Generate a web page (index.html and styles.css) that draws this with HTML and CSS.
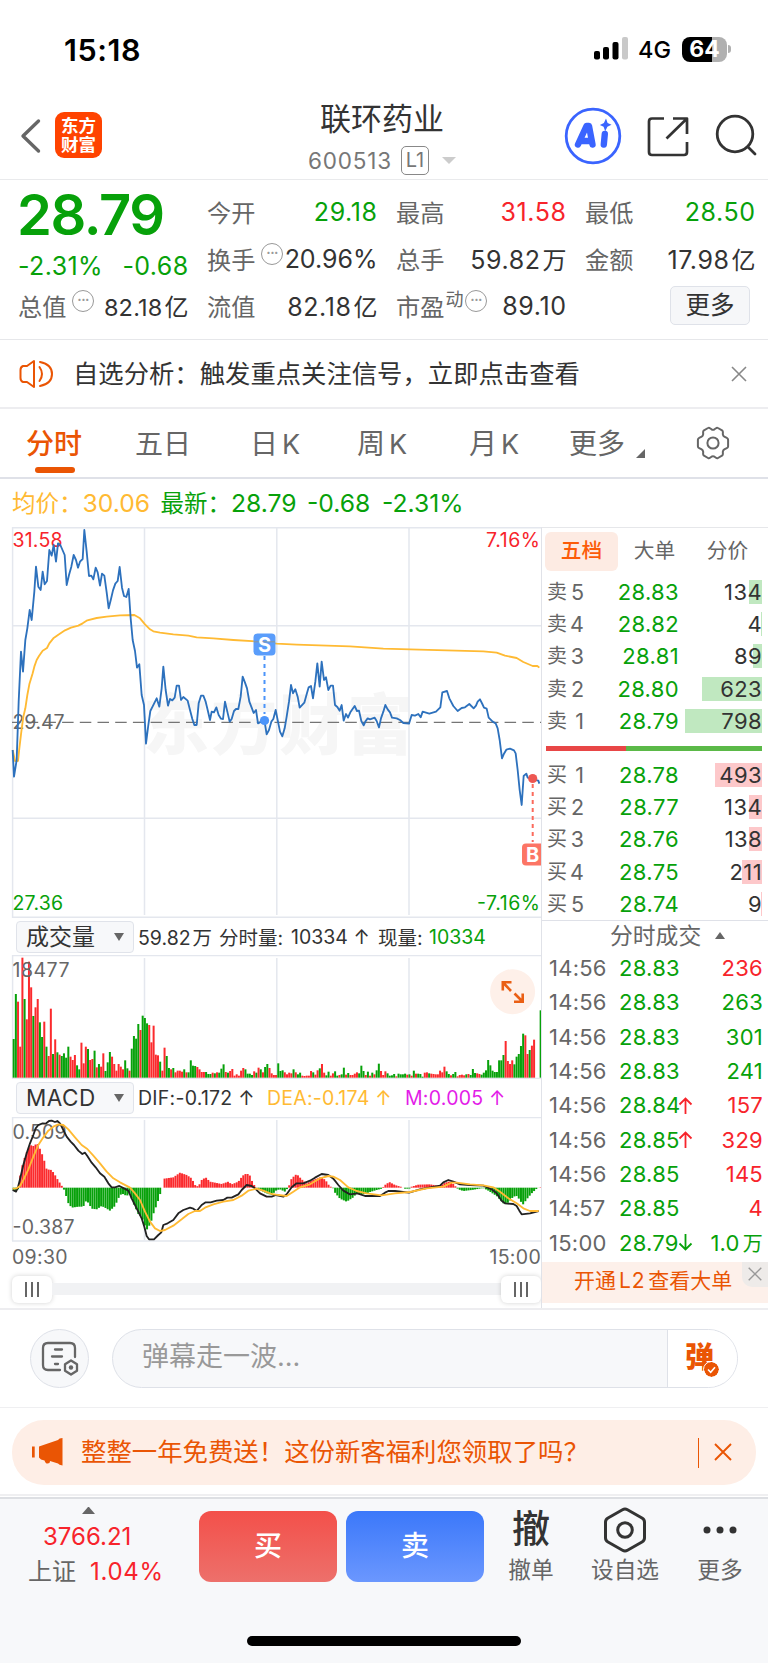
FILE: index.html
```html
<!DOCTYPE html>
<html lang="zh-CN">
<head>
<meta charset="utf-8">
<title>联环药业 600513</title>
<link rel="stylesheet" href="styles.css">
</head>
<body>
<div class="app">
  <div class="status">
    <span class="clock">15:18</span>
    <svg class="signal" width="34" height="24" viewBox="0 0 34 24"><rect x="0" y="14" width="6" height="8.500" rx="2"/><rect x="9" y="10" width="6" height="12.500" rx="2"/><rect x="18.500" y="5" width="6" height="17.500" rx="2"/><rect x="28" y="0" width="6" height="22.500" rx="2" fill="#c9c9c9"/></svg>
    <span class="net">4G</span>
    <span class="battery">64</span><span class="nub"></span>
  </div>

  <header class="header">
    <div class="head-left">
      <svg width="22" height="36" viewBox="0 0 22 36"><path d="M18.500 3 3 18l15.500 15" fill="none" stroke="#666" stroke-width="3.400" stroke-linecap="round" stroke-linejoin="round"/></svg>
      <div class="logo"><span>东方</span><span>财富</span></div>
    </div>
    <div class="title">
      <h1>联环药业</h1>
      <div class="code"><span class="num">600513</span><span class="level">L1</span><i class="tri-down"></i></div>
    </div>
    <div class="head-icons">
      <svg width="58" height="58" viewBox="0 0 58 58"><circle cx="29" cy="29" r="26.800" fill="none" stroke="#3a64ff" stroke-width="2.800"/><g fill="none" stroke="#3a64ff" stroke-width="6.400" stroke-linecap="round" stroke-linejoin="round"><path d="M14 37.500 22.500 19H25l3.500 18.500M19 34H26"/><path d="m40.800 27-1 10.500"/></g><path d="m42 11.500 1.600 4.400 3.900 1.900-4.100 2-2.200 4.500-1.600-4.500-3.700-1.900 4-1.900z" fill="#3a64ff"/></svg>
      <svg class="share" width="42" height="42" viewBox="0 0 42 42"><g fill="none" stroke="#333" stroke-width="2.700"><path d="M17 2.500H5q-3 0-3 3V36q0 3 3 3h32q3 0 3-3V26M26 2.500h14V18M40 2.500 19.500 22.500" stroke-linejoin="round"/></g></svg>
      <svg class="search" width="44" height="44" viewBox="0 0 44 44"><g fill="none" stroke="#333" stroke-width="2.800" stroke-linecap="round"><circle cx="20" cy="20" r="17.800"/><path d="m33 33 7 7"/></g></svg>
    </div>
  </header>

  <section class="quote">
    <div class="cell big">28.79</div>
    <div class="cell"><label>今开</label><b class="g">29.18</b></div>
    <div class="cell"><label>最高</label><b class="r">31.58</b></div>
    <div class="cell"><label>最低</label><b class="g">28.50</b></div>
    <div class="cell chg"><b class="g">-2.31%</b><b class="g">-0.68</b></div>
    <div class="cell tight"><label>换手</label><i class="info">•••</i><b>20.96%</b></div>
    <div class="cell"><label>总手</label><b>59.82<em>万</em></b></div>
    <div class="cell"><label>金额</label><b>17.98<em>亿</em></b></div>
    <div class="cell cap"><label>总值</label><i class="info">•••</i><b>82.18<em>亿</em></b></div>
    <div class="cell"><label>流值</label><b>82.18<em>亿</em></b></div>
    <div class="cell"><label>市盈<sup>动</sup></label><i class="info after-sup">•••</i><b>89.10</b></div>
    <div class="cell"><button class="more">更多</button></div>
  </section>

  <section class="notice">
    <svg width="34" height="30" viewBox="0 0 34 30"><g fill="none" stroke="#ea5504" stroke-width="2" stroke-linejoin="round" stroke-linecap="round"><path d="M15 2v26l-7-5H4q-2.500-1-2.500-4v-8q0-3 2.500-4h4zM20.500 8q5 7 0 14M21 3q12 2.500 12 12T21 27"/></g></svg>
    <span class="notice-text">自选分析：触发重点关注信号，立即点击查看</span>
    <svg width="16" height="16" viewBox="0 0 16 16"><path d="m1 1 14 14M15 1 1 15" stroke="#888" stroke-width="1.600"/></svg>
  </section>

  <nav class="tabs">
    <span class="tab active">分时</span><span class="tab t2">五日</span><span class="tab t3">日<u>K</u></span><span class="tab t4">周<u>K</u></span><span class="tab t5">月<u>K</u></span><span class="tab t6">更多</span>
    <svg class="corner" width="9" height="9"><path d="M9 0v9H0z" fill="#666"/></svg>
    <svg class="gear" width="34" height="34" viewBox="0 0 34 34"><g fill="none" stroke="#666" stroke-width="2" stroke-linejoin="round"><path d="M12 2q1-.7 2 .2l1.500 1.100q1.500.9 3 0L20 2.200q1-.9 2-.2l4 2.300q1 .8.900 1.900l-.1 2q.2 1.700 1.500 2.400l2.500 1.200q1.300.6 1.300 2v6.400q0 1.400-1.300 2l-2.500 1.200q-1.300.7-1.500 2.400l.1 2q.1 1.100-.9 1.900L22 32q-1 .7-2-.2l-1.500-1.100q-1.500-.9-3 0L14 31.800q-1 .9-2 .2l-4-2.300q-1-.8-.9-1.900l.1-2Q7 24.100 5.700 23.400L3.200 22.200q-1.300-.6-1.300-2v-6.400q0-1.400 1.300-2l2.500-1.200Q7 9.900 7.200 8.200l-.1-2Q7 5.100 8 4.300z"/><circle cx="17" cy="17" r="5.600"/></g></svg>
  </nav>

  <div class="avg"><span class="y">均价：</span><b class="y v1">30.06</b><span class="g">最新：</span><b class="g v2">28.79</b><b class="g v3">-0.68</b><b class="g v4">-2.31%</b></div>

  <main class="board">
    <div class="charts">
      <svg class="price" width="542" height="391" viewBox="0 527 542 391">
        <text x="143" y="749" class="wm" textLength="270">东方财富</text>
        <g stroke="#e4e7ee" stroke-width="1.500" fill="none"><path d="M144.500 527V915M276.800 527V915M409 527V915M12 625.800H541M12 818.300H541"/><path d="M12.600 918V527.800H542M12 917.300H541"/></g>
        <path d="M12 722.400H541" stroke="#757575" stroke-width="1.400" stroke-dasharray="11.500 6.200" stroke-dashoffset="3"/>
        <text x="12.500" y="547" class="ax" fill="#f7242b" textLength="50">31.58</text>
        <text x="12.500" y="728.500" class="ax" fill="#666" textLength="52">29.47</text>
        <text x="12.500" y="909.500" class="ax" fill="#07a10a" textLength="50.500">27.36</text>
        <text x="540" y="547" class="ax" fill="#f7242b" text-anchor="end" textLength="54">7.16%</text>
        <text x="540" y="909.500" class="ax" fill="#07a10a" text-anchor="end" textLength="63">-7.16%</text>
        <g transform="translate(0 515) scale(.33333)" fill="none" stroke-linejoin="round">
          <path stroke="#ffba33" stroke-width="5.500" d="M38 705 45 738 54 738 58 700 64 650 70 605 76 580 82 540 88 508 98 475 103 455 110 435 117 423 128 407 141 399 148 385 160 370 175 359 195 346 213 338 235 332 248 325 262 316 290 309 320 305 360 301 403 300 420 310 435 328 450 343 460 349 480 353 520 358 565 362 590 367 640 370 700 375 780 380 830 386 890 389 1050 394 1150 401 1230 403 1340 406 1450 409 1490 413 1515 422 1550 429 1570 441 1598 453 1612 453 1618 458"/>
          <path stroke="#2d71bd" stroke-width="5.500" d="M38 705 42 785 50 735 56 560 63 410 69 470 76 375 82 340 89 285 95 315 103 230 108 155 115 215 122 225 128 170 134 208 141 198 148 105 155 122 161 90 168 140 174 85 181 90 194 120 200 210 207 180 214 155 221 120 228 135 234 158 240 140 248 132 253 45 260 110 267 183 274 182 280 193 287 158 293 172 300 212 306 176 313 182 320 232 326 280 333 252 339 226 346 206 353 198 359 156 366 218 372 243 379 246 386 222 392 310 398 375 405 408 411 458 418 448 425 540 432 570 438 686 445 630 451 588 458 574 470 550 478 575 485 520 490 455 497 525 504 572 510 552 517 556 524 548 530 512 537 512 543 555 550 546 563 557 570 585 577 612 583 630 590 630 596 565 603 542 610 542 617 560 623 585 630 615 635 590 642 592 649 577 656 600 663 611 669 612 675 560 682 590 689 620 695 612 702 588 708 582 715 582 722 545 728 485 735 503 741 520 748 560 755 578 761 594 768 585 774 625 793 615 800 658 807 645 814 620 820 612 827 585 834 620 840 650 847 664 854 640 860 605 867 560 873 510 879 535 886 523 893 545 899 578 913 563 920 538 926 517 933 513 939 550 946 500 952 445 959 515 965 440 972 495 978 487 985 525 992 512 999 512 1005 570 1012 576 1019 587 1025 570 1031 617 1038 597 1044 608 1051 592 1064 573 1071 588 1077 587 1084 618 1091 631 1097 618 1103 610 1110 613 1124 608 1130 618 1137 637 1143 610 1150 590 1156 570 1163 583 1170 592 1176 608 1190 610 1200 615 1210 624 1227 626 1235 600 1245 602 1255 597 1262 607 1268 590 1288 596 1308 590 1321 577 1327 532 1341 528 1348 550 1360 573 1373 588 1385 579 1395 577 1408 567 1421 580 1428 572 1433 560 1440 553 1447 567 1452 578 1460 581 1466 608 1478 620 1487 625 1493 640 1499 675 1506 730 1512 716 1519 704 1530 701 1542 706 1547 715 1553 765 1559 825 1565 870 1571 783 1579 776 1583 788 1597 793 1615 797 1618 806"/>
        </g>
        <path d="M264.500 656v58" stroke="#4b94fa" stroke-width="2" stroke-dasharray="4 4"/>
        <circle cx="264.500" cy="720.500" r="4.600" fill="#4b94fa"/>
        <rect x="253.500" y="633.500" width="22" height="22" rx="4" fill="#5a9dfb"/><path d="M254 641.700H275" stroke="#7c98b8" stroke-width="1.500"/>
        <text x="264.500" y="651.500" class="mark">S</text>
        <path d="M532.700 784v58" stroke="#fb6a5c" stroke-width="2" stroke-dasharray="4 4"/>
        <circle cx="532.700" cy="778.500" r="4.600" fill="#ed5752"/>
        <path d="M541.500 843.500H526q-4 0-4 4V861.500q0 4 4 4h15.500z" fill="#fc7565"/>
        <text x="532.500" y="861.500" class="mark">B</text>
      </svg>
      <div class="ind"><span class="select"><span>成交量</span><i></i></span><span class="t k w1">59.82<em>万</em><em>分时量:</em></span><span class="t k w2">10334 ↑</span><span class="t k w3">现量:</span><span class="t g">10334</span></div>
      <svg class="vol" width="542" height="124" viewBox="0 955 542 124">
        <g stroke="#e4e7ee" stroke-width="1.500" fill="none"><path d="M144.500 958V1078M276.800 958V1078M409 958V1078M12.600 1079V955.500H541M12 1078.500H541"/></g>
        <g id="volume"></g>
        <text x="12.500" y="976.500" class="ax" fill="#666" textLength="57">18477</text>
        <circle cx="512.600" cy="991.700" r="22.500" fill="#fef0e9"/>
        <path d="M502.800 990.500V982.300H511.500M503.500 983l7.500 8M522.700 993.500v8.200H514M522 1001 514.500 993.500" fill="none" stroke="#ea5f14" stroke-width="2.600"/>
      </svg>
      <div class="ind"><span class="select"><span class="macd">MACD</span><i></i></span><span class="t k w4">DIF:-0.172 ↑</span><span class="t y w5">DEA:-0.174 ↑</span><span class="t m">M:0.005 ↑</span></div>
      <svg class="macdc" width="542" height="125" viewBox="0 1117 542 125">
        <g stroke="#e4e7ee" stroke-width="1.500" fill="none"><path d="M144.500 1120V1240M276.800 1120V1240M409 1120V1240M12.600 1241V1117.500H541M12 1241H541"/></g>
        <g id="hist"></g>
        <text x="12.500" y="1138.500" class="ax" fill="#666" textLength="54">0.509</text>
        <text x="12.500" y="1233.500" class="ax" fill="#666" textLength="62">-0.387</text>
        <g transform="translate(0 910) scale(.33333)" fill="none" stroke-linejoin="round" stroke-width="5.500">
          <path stroke="#222" d="M38 840 48 845 54 832 60 808 70 765 80 730 90 700 100 675 107 655 115 645 128 640 137 641 147 633 155 632 165 636 172 633 180 640 190 660 200 680 212 695 222 705 235 722 247 732 255 728 262 738 275 758 287 772 300 790 313 800 325 820 335 832 345 832 358 828 372 835 385 842 395 865 410 895 425 925 433 950 440 978 447 988 462 988 475 975 484 967 490 945 503 940 520 930 535 910 550 900 570 893 580 896 590 903 605 885 617 877 632 877 650 872 670 870 682 863 695 863 715 853 725 840 740 825 755 828 765 835 780 850 800 860 815 860 828 855 850 860 860 853 875 832 890 820 910 820 930 812 945 803 965 792 985 795 1000 806 1015 825 1030 842 1050 853 1072 850 1095 858 1140 858 1155 848 1165 843 1185 843 1227 848 1260 838 1320 827 1330 817 1345 810 1360 815 1380 823 1410 825 1450 827 1475 838 1490 850 1505 872 1515 880 1540 882 1550 888 1558 902 1565 913 1590 910 1616 903"/>
          <path stroke="#ffba33" d="M38 836 50 835 60 828 70 810 85 778 100 740 115 705 130 682 145 662 160 650 175 643 190 645 205 658 225 682 245 705 262 717 280 737 300 760 320 785 340 805 360 817 390 833 405 850 420 870 435 905 450 935 465 955 480 963 495 960 520 947 545 928 565 912 585 903 600 903 615 893 640 883 670 875 700 870 725 857 745 842 770 836 790 842 815 852 828 854 860 858 880 845 900 832 930 823 960 805 985 798 1000 800 1020 810 1045 832 1070 843 1100 850 1145 856 1185 850 1230 846 1280 835 1330 830 1355 818 1370 818 1410 823 1450 826 1480 832 1500 845 1525 865 1550 880 1570 895 1590 903 1616 903"/>
        </g>
      </svg>
      <div class="times"><span>09:30</span><span>15:00</span></div>
      <div class="slider"><span class="handle"></span><span class="track"></span><span class="handle"></span></div>
    </div>

    <aside class="side">
      <div class="side-tabs"><span class="on">五档</span><span>大单</span><span>分价</span></div>
      <div id="asks"></div>
      <div class="ratio"></div>
      <div id="bids"></div>
      <div class="deal-head">分时成交<i></i></div>
      <div id="deals"></div>
      <div class="l2"><span>开通<u>L2</u>查看大单</span><span class="l2x"><svg width="14" height="14" viewBox="0 0 14 14"><path d="m.7.7 12.600 12.600M13.300.7.7 13.300" stroke="#999" stroke-width="1.400"/></svg></span></div>
    </aside>
  </main>

  <section class="danmu">
    <span class="round"><svg width="38" height="36" viewBox="0 0 38 36"><g fill="none" stroke="#666" stroke-width="2.300" stroke-linecap="round" stroke-linejoin="round"><path d="M19 29H7q-5 0-5-5V7q0-5 5-5h22q5 0 5 5v9M14 8.500h7M11 15.500h10M14 23h3"/><path d="m30 19.500 6 3.800v6.400l-6 3.800-6-3.800v-6.400z"/></g><circle cx="30" cy="26.500" r="2.200" fill="#666"/></svg></span>
    <div class="field"><span class="ph">弹幕走一波...</span><span class="send">弹<svg width="15" height="15" viewBox="0 0 15 15"><circle cx="7.500" cy="7.500" r="7.500" fill="#ea5504"/><path d="m4 7.500 2.700 2.800L11 5.200" fill="none" stroke="#fff" stroke-width="1.600"/></svg></span></div>
  </section>

  <section class="promo-wrap"><div class="promo">
    <svg width="32" height="28" viewBox="0 0 32 28"><path d="M0 8.500h2.700v11H0zM7 8.500 26 2q1-1.800 4.500-2v27.500Q27 27 26 25.500l-8-2.500q0 2.500-2.500 2.500h-1q-1.500-1-2-3L9 21.500 7 19.500z" fill="#ea5504"/></svg>
    <span class="promo-text">整整一年免费送！这份新客福利您领取了吗？</span>
    <i class="bar"></i>
    <svg width="18" height="18" viewBox="0 0 18 18"><path d="m1 1 16 16M17 1 1 17" stroke="#ea5504" stroke-width="1.900"/></svg>
  </div></section>

  <footer class="foot">
    <div class="index"><i></i><b>3766.21</b><div><span>上证</span><b>1.04%</b></div></div>
    <button class="buy">买</button><button class="sell">卖</button>
    <div class="act a1"><strong>撤</strong><span>撤单</span></div>
    <div class="act a2"><svg width="44" height="46" viewBox="0 0 44 46"><g fill="none" stroke="#333" stroke-width="3" stroke-linejoin="round"><path d="M19.500 2.800q2.500-1.400 5 0L39 11q2.500 1.500 2.500 4v16q0 2.500-2.500 4L24.500 43.200q-2.500 1.400-5 0L5 35q-2.500-1.500-2.500-4V15q0-2.500 2.500-4z"/><circle cx="22" cy="23" r="7.300"/></g></svg><span>设自选</span></div>
    <div class="act a3"><svg width="34" height="8" viewBox="0 0 34 8"><g fill="#333"><circle cx="4" cy="4" r="3.500"/><circle cx="17" cy="4" r="3.500"/><circle cx="30" cy="4" r="3.500"/></g></svg><span>更多</span></div>
    <div class="home"></div>
  </footer>
</div>
<script src="charts.js"></script>
</body>
</html>
```

FILE: styles.css
```css
* { box-sizing: border-box; }
body { margin: 0; background: #fff; font-family: Inter, "Noto Sans CJK SC", sans-serif; color: #333; }
.app { width: 768px; height: 1663px; overflow: hidden; }
b { font-weight: 400; }
em, i { font-style: normal; }
u { text-decoration: none; }
svg { display: block; flex: none; }
button { border: 0; padding: 0; font-family: inherit; }
.g { color: #07a10a; }
.r { color: #f7242b; }
.y { color: #ffba33; }
.m { color: #e31ce8; }
.k { color: #333; }

.status { height: 92px; padding: 6px 37px 0 64px; display: flex; align-items: center; color: #000; }
.clock { font-size: 30.500px; font-weight: 600; letter-spacing: .6px; flex: 1; }
.net { font-size: 23.500px; margin: 1px 11px 0 10px; font-weight: 500; letter-spacing: 0; }
.battery { width: 45px; height: 25px; border-radius: 8px; background: linear-gradient(90deg, #000 66%, #b0b0b0 66%); color: #fff; font-weight: 700; font-size: 23px; line-height: 25px; text-align: center; }
.nub { width: 3px; height: 8px; margin-left: 1px; background: #b0b0b0; border-radius: 0 4px 4px 0; }

.header { height: 88px; border-bottom: 1px solid #e9eaec; display: flex; }
.head-left { width: 290px; padding: 20px 0 0 20px; display: flex; gap: 13px; align-items: flex-start; }
.head-left > svg { margin-top: 6px; }
.logo { width: 47px; height: 46px; background: #ff4300; border-radius: 9px; color: #fff; font-weight: 700; font-size: 17.500px; line-height: 19px; padding-top: 4px; display: flex; flex-direction: column; align-items: center; }
.title { width: 190px; }
.title h1 { margin: 5px 6px 0 0; font-size: 31px; line-height: 44px; font-weight: 400; text-align: center; color: #333; }
.code { display: flex; align-items: center; margin: 5px 0 0 18px; color: #777; font-size: 22.500px; }
.code .num { letter-spacing: .8px; width: 93px; }
.level { border: 1.500px solid #888; border-radius: 5px; height: 29px; width: 28px; line-height: 27px; text-align: center; font-size: 20px; }
.tri-down { border: 7px solid transparent; border-top-color: #ccc; border-bottom: 0; margin-left: 13px; }
.head-icons { flex: 1; display: flex; padding: 15px 0 0 84px; }
.share { margin: 9px 0 0 25px; }
.search { margin: 7px 0 0 26px; }

.quote { height: 160px; border-bottom: 1.500px solid #e6e7ea; padding: 8px 13px 0 19px; display: grid; grid-template-columns: repeat(4, 169px); column-gap: 20px; grid-auto-rows: 47px; align-items: center; }
.cell { display: flex; align-items: center; white-space: nowrap; height: 47px; font-size: 25px; letter-spacing: .6px; }
.cell label { font-size: 24.200px; color: #666; letter-spacing: 0; margin-left: -1px; }
.cell b { margin-left: auto; margin-right: -.6px; }
.cell em { font-size: 24px; margin-left: 2px; letter-spacing: 0; }
.cell.big { font-size: 56px; font-weight: 600; color: #07a10a; letter-spacing: -1.400px; padding-top: 6px; margin-left: -2px; }
.cell.tight { letter-spacing: 0; }
.cell.cap { font-size: 23.500px; letter-spacing: .2px; }
.chg { padding-top: 14px; letter-spacing: .4px; }
.chg b:first-child { margin-left: -1px; }
.info { width: 22px; height: 22px; border: 1.800px solid #999; border-radius: 50%; color: #999; font-size: 7px; line-height: 18px; text-align: center; margin: -10px -10px 0 6px; flex: none; letter-spacing: 0; }
.after-sup { margin-left: 2px; }
.cell sup { font-size: 18px; line-height: 0; vertical-align: 10px; margin-left: 1px; }
.more { margin-left: auto; margin-right: 5px; width: 80px; height: 39px; border: 1.500px solid #dfe2e9; border-radius: 5px; background: #f6f7f9; font-size: 24.500px; color: #333; line-height: 34px; letter-spacing: 0; margin-top: -1px; }

.notice { height: 69px; border-bottom: 2px solid #ededf0; padding: 0 21px 0 19px; display: flex; align-items: center; }
.notice-text { flex: 1; margin: -4px 0 0 20px; font-size: 25.350px; }

.tabs { height: 70px; border-bottom: 2px solid #dfe1e8; display: flex; font-size: 28px; line-height: 70px; color: #666; padding-left: 26px; }
.tab { width: 109px; white-space: nowrap; }
.tab u { margin-left: 4px; font-size: 27px; }
.active { color: #ea5504; font-weight: 500; position: relative; }
.active::after { content: ""; position: absolute; left: 9px; top: 58px; width: 40px; height: 6px; border-radius: 3px; background: #ea5504; }
.t2 { width: 115px; }
.t3 { width: 107px; }
.t4 { width: 112px; }
.t5 { width: 100px; }
.t6 { width: 67px; }
.corner { margin-top: 40px; }
.gear { margin: 17px 0 0 51px; }

.avg { height: 48px; display: flex; padding-left: 12px; line-height: 49px; font-size: 23.500px; }
.avg b { font-size: 24.700px; }
.v1 { width: 78px; }
.v2 { width: 76px; }
.v3 { width: 75px; }

.board { height: 783px; border-bottom: 2px solid #ededf0; display: flex; }
.charts { width: 541px; flex: none; overflow: hidden; }
.ax { font: 19.500px Inter, sans-serif; }
.wm { font: 900 66px "Noto Sans CJK SC", sans-serif; fill: #f6f6f6; }
.mark { font: 700 20px Inter, sans-serif; fill: #fff; text-anchor: middle; }
.ind { height: 37px; display: flex; align-items: center; padding-left: 16px; font-size: 19.500px; white-space: nowrap; }
.vol + .ind { height: 38px; letter-spacing: .25px; }
.w1 { width: 153px; }
.w1 em:first-child { margin-left: 2px; }
.w1 em:last-child { margin-left: 7px; }
.w2 { width: 87px; }
.w3 { width: 51px; }
.w4 { width: 129px; }
.w5 { width: 138px; }
.select { width: 118px; height: 32px; border: 1.500px solid #e0e3ea; border-radius: 4px; background: #f7f8fa; display: flex; align-items: center; justify-content: space-between; padding: 0 9px; font-size: 23px; margin-right: 4px; flex: none; line-height: 28px; letter-spacing: 0; }
.select i { border: 5px solid transparent; border-top: 8px solid #666; border-bottom: 0; }
.macd { font-size: 22.500px; letter-spacing: .5px; }
.times { height: 32px; display: flex; justify-content: space-between; padding-left: 12px; font-size: 19.500px; line-height: 31px; color: #666; letter-spacing: .3px; }
.slider { display: flex; align-items: center; padding-left: 12px; height: 30px; }
.track { flex: 1; height: 12px; background: #f1f2f4; }
.handle { width: 40px; height: 27px; border-radius: 6px; background: #fff linear-gradient(90deg, #666 2px, transparent 2px 6px, #666 6px 8px, transparent 8px 12px, #666 12px 14px) no-repeat center / 14px 15px; box-shadow: 0 0 5px rgba(0,0,0,.18); }

.side { width: 227px; border-left: 1.500px solid #e0e2e8; border-top: 1px solid #e6e7ea; }
.side-tabs { display: flex; height: 48px; padding: 4px 0 0 3px; font-size: 20.700px; color: #666; line-height: 38px; }
.side-tabs span { width: 73px; height: 39px; text-align: center; border-radius: 6px; }
.side-tabs .on { background: #fdebe3; color: #fc5c09; font-weight: 500; }
.lv { height: 32.200px; display: flex; align-items: center; padding-left: 5px; font-size: 22px; }
.lv .n { width: 37px; color: #666; font-size: 20px; line-height: 28px; display: flex; justify-content: space-between; align-items: center; }
.lv .n u { font-size: 21.500px; }
.lv .p { width: 95px; text-align: right; letter-spacing: .35px; }
.lv .q { width: 83px; height: 24px; line-height: 24px; text-align: right; letter-spacing: .4px; background: no-repeat right / 10px 24px; }
.ask .q { background-image: linear-gradient(#c0e8c0, #c0e8c0); }
.bid .q { background-image: linear-gradient(#fdc8ca, #fdc8ca); }
.ratio { width: 216px; height: 5px; margin: 9px 0 8px 4px; background: linear-gradient(90deg, #e84646 80px, #5bb948 80px); }
.deal-head { height: 31px; border-top: 1.500px solid #dfe1e8; font-size: 22.800px; line-height: 30px; color: #666; padding-left: 68px; display: flex; align-items: center; }
.deal-head i { border: 5px solid transparent; border-bottom: 7px solid #666; border-top: 0; margin-left: 14px; }
#deals { padding-bottom: 2px; }
.deal { height: 34.350px; display: flex; align-items: center; padding-left: 7px; font-size: 22px; letter-spacing: .25px; }
.deal .tm { width: 70px; color: #666; }
.deal .p { width: 59px; white-space: nowrap; }
.deal .a { width: 15px; height: 17px; }
.deal .q { margin-left: auto; padding-right: 5px; }
.deal .q em { margin-left: 3px; font-size: 20px; }
.l2 { height: 41px; background: #fdf0ea; color: #ea5504; font-size: 21px; line-height: 37px; padding-left: 32px; display: flex; justify-content: space-between; }
.l2 u { margin: 0 3px; letter-spacing: .8px; }
.l2x { width: 26px; height: 25px; background: #eeebe9; border-radius: 0 0 0 10px; display: flex; align-items: center; justify-content: center; }

.danmu { height: 98px; border-bottom: 1.500px solid #efeff1; display: flex; padding: 19px 30px 0; gap: 23px; }
.round { width: 59px; height: 59px; border: 1.500px solid #dee1e8; border-radius: 50%; background: #f7f8fa; display: flex; align-items: center; justify-content: center; }
.field { width: 626px; height: 59px; border: 1.500px solid #dee1e8; border-radius: 30px; background: #f7f8fa; display: flex; overflow: hidden; }
.ph { flex: 1; padding-left: 29px; font-size: 27px; line-height: 53px; color: #999; }
.send { width: 70px; border-left: 1.500px solid #dee1e8; background: #fff; color: #ea5504; font-size: 29px; font-weight: 900; line-height: 55px; padding-left: 17px; position: relative; }
.send svg { position: absolute; left: 36px; top: 32px; outline: 1.500px solid #fff; border-radius: 50%; }

.promo-wrap { height: 88px; padding: 12px 12px 0; border-bottom: 2px solid #efeff1; }
.promo { height: 65px; border-radius: 32px; background: #feeee6; display: flex; align-items: center; padding: 0 24px 0 20px; color: #ea5504; }
.promo > svg { margin-top: -2px; }
.promo-text { flex: 1; margin: -5px 0 0 17px; font-size: 25.400px; }
.bar { width: 1.500px; height: 30px; background: #ea5504; margin-right: 15px; }

.foot { height: 166px; border-top: 2px solid #dddfe3; margin-top: 1px; background: #f7f8fa; display: flex; position: relative; }
.index { width: 199px; display: flex; flex-direction: column; font-size: 24px; color: #f7242b; line-height: 35px; padding-left: 28px; }
.index > i { border: 6.500px solid transparent; border-bottom: 7px solid #666; border-top: 0; width: 13px; margin: 8px 0 5px 54px; }
.index > b { margin-left: 15px; }
.index div b { letter-spacing: .7px; }
.index span { color: #666; margin-right: 14px; }
.buy, .sell { width: 138px; height: 71px; margin-top: 12px; border-radius: 12px; color: #fff; font-size: 28px; font-weight: 500; line-height: 69px; }
.buy { background: linear-gradient(#f3504a, #ed706b); margin-right: 9px; }
.sell { background: linear-gradient(#3b78fa, #6b97fe); }
.act { display: flex; flex-direction: column; align-items: center; justify-content: flex-end; height: 89px; font-size: 22.700px; line-height: 36px; color: #666; }
.act strong { font-weight: 500; font-size: 38px; line-height: 48px; color: #333; }
.a1 { width: 46px; margin-left: 24px; }
.a2 { width: 70px; margin-left: 36px; }
.a2 svg { margin-bottom: -1px; }
.a3 { width: 46px; margin-left: 37px; }
.a3 svg { margin-bottom: 18px; }
.home { position: absolute; left: 247px; top: 137px; width: 274px; height: 10px; border-radius: 5px; background: #000; }
```

FILE: charts.js
```javascript
const RED = '#fb2a2d', GREEN = '#07a10a';
const STEP = 6.56 / 3, START = 38 / 3;

// Minute volume: colour letter followed by the y of the bar top, in thirds of a pixel.
const volume = 'g387 g252 r275 r410 r143 g267 r328 r155 r232 g318 r292 r267 g337 g381 r335 g410 r438 r296 g432 r388 g427 r434 g438 g430 g443 g410 r440 r450 r435 g466 g478 r398 r460 r410 g417 r450 r447 g422 r472 g462 r470 r430 g483 g457 g426 r440 r462 r482 r462 r470 r478 g451 g475 r482 g416 g378 g386 g342 r360 g317 g324 g340 r345 r397 r347 r434 r436 g455 r482 r413 g438 g474 r478 g474 r487 r482 r482 r485 g478 r487 g487 g451 g467 g468 r471 r478 r486 r486 g486 g492 g492 r488 g490 r487 g488 g476 g463 r486 g488 r483 r477 r497 r493 r497 r482 r474 g478 g491 g491 g495 r484 g488 r473 g478 r487 g471 g462 r474 r490 r495 r495 g460 g483 g481 r487 r493 r488 r490 g478 r487 g493 g488 r497 r498 r497 r497 r483 g487 r494 r481 g475 r462 r488 g496 g485 r497 r490 g484 g497 r495 g493 g473 r494 g489 r495 r495 r491 r487 g490 g467 g483 r495 g485 r497 g488 r493 g481 g461 r483 r495 r484 g490 g497 g496 g492 r499 g491 g493 g493 g491 r494 g493 r497 g482 r491 g491 g492 g500 r488 r487 g490 r491 r492 r493 r493 r482 r487 r470 g484 g492 r496 g492 g486 r499 r495 r494 r496 g493 r492 g495 g477 g489 r490 r492 g494 g488 g481 g450 g466 g482 g486 g486 g451 g451 g435 r393 r453 r462 r451 g463 g440 g432 g408 g371 r376 r432 g420 r407 r389 g503 g503 g301'.split(' ');

function bar(x, top, bottom, fill) {
  return `<rect x="${x.toFixed(2)}" y="${top.toFixed(2)}" width="2" height="${(bottom - top).toFixed(2)}" fill="${fill}"/>`;
}

document.getElementById('volume').innerHTML = volume.map((v, i) =>
  bar(START + i * STEP, 910 + Number(v.slice(1)) / 3, 910 + 503 / 3, v[0] === 'r' ? RED : GREEN)).join('');

// MACD histogram outline: x, y pairs in thirds of a pixel, sampled once a minute.
const outline = [38,838,50,848,56,833,60,800,66,770,75,740,82,722,90,705,100,708,112,700,118,712,130,742,140,778,155,780,165,795,175,812,187,830,188,833,194,842,204,878,215,893,235,890,250,890,257,874,265,878,275,896,290,898,305,888,315,893,330,902,345,888,355,865,365,850,380,858,390,850,400,880,415,912,425,920,432,940,440,960,452,940,460,912,470,885,480,855,484,833,490,833,492,806,520,802,540,788,560,795,575,805,585,825,595,830,605,810,617,802,630,815,645,818,665,822,685,815,695,823,715,815,728,797,740,790,750,797,758,818,766,830,780,840,800,850,815,855,825,845,830,840,840,838,855,845,862,836,868,825,875,805,890,792,905,808,920,820,940,810,965,800,980,815,988,828,998,833,1005,848,1020,866,1040,875,1060,862,1070,850,1085,855,1110,846,1130,840,1145,836,1155,825,1168,816,1185,825,1205,831,1215,836,1228,836,1235,830,1255,824,1290,823,1320,828,1335,818,1350,814,1360,822,1368,831,1375,838,1390,843,1415,840,1450,834,1465,842,1490,858,1510,880,1525,878,1535,865,1548,856,1560,870,1568,885,1580,868,1595,850,1610,836,1616,833,1625,831];
let hist = '';
for (let i = 0; i <= 241; i++) {
  const x = 38 + i * 6.56, c = Math.min(x + 3, 1624);
  let k = 0;
  while (k + 4 < outline.length && outline[k + 2] < c) k += 2;
  const t = (c - outline[k]) / (outline[k + 2] - outline[k]);
  const y = outline[k + 1] + t * (outline[k + 3] - outline[k + 1]);
  hist += bar(x / 3, 910 + Math.min(y, 833) / 3, 910 + Math.max(y, 833) / 3, y < 833 ? RED : GREEN);
}
document.getElementById('hist').innerHTML = hist;

const asks = [[5, '28.83', 134, 13], [4, '28.82', 4, 1], [3, '28.81', 89, 9], [2, '28.80', 623, 60], [1, '28.79', 798, 77]];
const bids = [[1, '28.78', 493, 47], [2, '28.77', 134, 13], [3, '28.76', 138, 13], [4, '28.75', 211, 20], [5, '28.74', 9, 1]];
const level = (name, cls) => ([n, p, q, w]) =>
  `<div class="lv ${cls}"><span class="n">${name}<u>${n}</u></span><span class="p g">${p}</span><span class="q" style="background-size:${w}px 24px">${q}</span></div>`;
document.getElementById('asks').innerHTML = asks.map(level('卖', 'ask')).join('');
document.getElementById('bids').innerHTML = bids.map(level('买', 'bid')).join('');

const UP = '<svg class="a" viewBox="0 0 15 17"><path d="M7.500 17V1.500M1.500 7.500l6-6 6 6" fill="none" stroke="#f7242b" stroke-width="1.800"/></svg>';
const DOWN = '<svg class="a" viewBox="0 0 15 17"><path d="M7.500 0v15.500M1.500 9.500l6 6 6-6" fill="none" stroke="#07a10a" stroke-width="1.800"/></svg>';
const deals = [['14:56', '28.83', '', '236', 'r'], ['14:56', '28.83', '', '263', 'g'], ['14:56', '28.83', '', '301', 'g'], ['14:56', '28.83', '', '241', 'g'], ['14:56', '28.84', UP, '157', 'r'], ['14:56', '28.85', UP, '329', 'r'], ['14:56', '28.85', '', '145', 'r'], ['14:57', '28.85', '', '4', 'r'], ['15:00', '28.79', DOWN, '1.0<em>万</em>', 'g']];
document.getElementById('deals').innerHTML = deals.map(([t, p, a, q, c]) =>
  `<div class="deal"><span class="tm">${t}</span><span class="p g">${p}</span>${a}<span class="q ${c}">${q}</span></div>`).join('');
```
